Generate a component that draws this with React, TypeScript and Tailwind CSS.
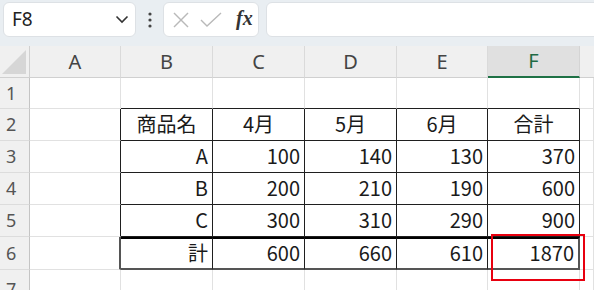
import React from "react";

const cols = ["A", "B", "C", "D", "E", "F"];

const rows: (string | number)[][] = [
  [],
  ["商品名", "4月", "5月", "6月", "合計"],
  ["A", 100, 140, 130, 370],
  ["B", 200, 210, 190, 600],
  ["C", 300, 310, 290, 900],
  ["計", 600, 660, 610, 1870],
  [],
];

const cellFont = { fontFamily: '"Noto Sans CJK JP", "Noto Sans", sans-serif' };
const uiFont = { fontFamily: '"Noto Sans", "Liberation Sans", sans-serif' };

// border classes per cell, r = sheet row (1..7), c = column (1..7, 7 = past F)
const cellBorder = (r: number, c: number) => {
  const inTable = r >= 2 && r <= 6;
  let right = "border-r border-r-[#e1e1e1]";
  if (inTable && c >= 1 && c <= 6) {
    right = "border-r border-r-[#1f1f1f]";
    if (r === 6 && (c === 1 || c === 6)) right = "border-r-2 border-r-[#555]";
  }
  let bottom = "border-b border-b-[#e1e1e1]";
  let top = "";
  if (c >= 2 && c <= 6) {
    if (r >= 1 && r <= 5) bottom = "border-b border-b-[#1f1f1f]";
    if (r === 6) {
      bottom = "border-b-2 border-b-[#555]";
      top = "border-t-2 border-t-black";
    }
  }
  return `${right} ${bottom} ${top}`;
};

function Toolbar() {
  return (
    <div className="flex h-[46px] items-start bg-[#e9eef2] pl-[3px] pt-[2px]">
      <div
        className="flex h-[35px] w-[133px] items-center justify-between rounded-[6px] border border-[#dde1e5] bg-white pl-[8px] pr-[6px] text-[19px] text-[#222]"
        style={uiFont}
      >
        <span>F8</span>
        <svg width="14" height="9" viewBox="0 0 14 9">
          <polyline points="1.5,1.5 7,7 12.5,1.5" fill="none" stroke="#333" strokeWidth="1.6" />
        </svg>
      </div>
      <svg className="ml-[10px] mt-[9px]" width="8" height="18" viewBox="0 0 8 18">
        <circle cx="4" cy="3" r="1.6" fill="#444" />
        <circle cx="4" cy="9" r="1.6" fill="#444" />
        <circle cx="4" cy="15" r="1.6" fill="#444" />
      </svg>
      <div className="ml-[9px] flex h-[35px] w-[96px] items-center rounded-[6px] border border-[#dde1e5] bg-white pl-[8px]">
        <svg width="18" height="16" viewBox="0 0 18 16">
          <line x1="2" y1="1" x2="16" y2="15" stroke="#b9b9b9" strokeWidth="1.4" />
          <line x1="16" y1="1" x2="2" y2="15" stroke="#b9b9b9" strokeWidth="1.4" />
        </svg>
        <svg className="ml-[10px]" width="22" height="16" viewBox="0 0 22 16">
          <polyline points="1,8 7,14 21,1" fill="none" stroke="#b9b9b9" strokeWidth="1.4" />
        </svg>
        <span
          className="ml-[14px] pb-[3px] text-[20px] font-bold italic leading-none text-[#333]"
          style={{ fontFamily: '"Liberation Serif", "DejaVu Serif", serif' }}
        >
          fx
        </span>
      </div>
      <div className="ml-[7px] mr-[-8px] h-[35px] flex-1 rounded-[6px] border border-[#dde1e5] bg-white" />
    </div>
  );
}

export default function App() {
  return (
    <div className="h-[290px] w-[594px] overflow-hidden bg-white">
      <Toolbar />
      <div className="relative grid grid-cols-[30px_91px_92px_92px_92px_91px_92px_1fr] grid-rows-[32px_31px_32px_32px_32px_32px_33px_40px]">
        {/* select-all corner */}
        <div className="flex items-end justify-end border-b border-r border-[#d0d0d0] bg-[#f0f0f0] pb-[2px] pr-[2px]">
          <svg width="25" height="25" viewBox="0 0 25 25">
            <polygon points="24,0 24,24 0,24" fill="#d6d6d6" />
          </svg>
        </div>
        {cols.map((c) => (
          <div
            key={c}
            className={
              c === "F"
                ? "flex items-center justify-center border-b-2 border-r border-b-[#1e7145] border-r-[#d4d4d4] bg-[#e0e0e0] text-[20px] text-[#1f6a44]"
                : "flex items-center justify-center border-b border-r border-b-[#d0d0d0] border-r-[#dadada] bg-[#f0f0f0] text-[20px] text-[#444]"
            }
            style={uiFont}
          >
            {c}
          </div>
        ))}
        <div className="border-b border-[#d0d0d0] bg-[#f0f0f0]" />

        {rows.map((row, i) => {
          const r = i + 1;
          return (
            <React.Fragment key={r}>
              <div
                className="flex items-center border-b border-r border-b-[#dcdcdc] border-r-[#c4c4c4] bg-[#f0f0f0] pl-[6px] text-[18px] text-[#555]"
                style={uiFont}
              >
                {r}
              </div>
              {[1, 2, 3, 4, 5, 6, 7].map((c) => {
                const v = c >= 2 && c <= 6 ? row[c - 2] : undefined;
                const center = r === 2;
                return (
                  <div
                    key={c}
                    className={`flex items-center pb-[1px] text-[20px] leading-none text-[#1a1a1a] ${
                      center ? "justify-center" : "justify-end pr-[4px]"
                    } ${cellBorder(r, c)}`}
                    style={cellFont}
                  >
                    {v}
                  </div>
                );
              })}
            </React.Fragment>
          );
        })}

        {/* highlight around F6 */}
        <div className="pointer-events-none absolute left-[491px] top-[188px] h-[47px] w-[94px] border-2 border-[#e8000f]" />
      </div>
    </div>
  );
}
